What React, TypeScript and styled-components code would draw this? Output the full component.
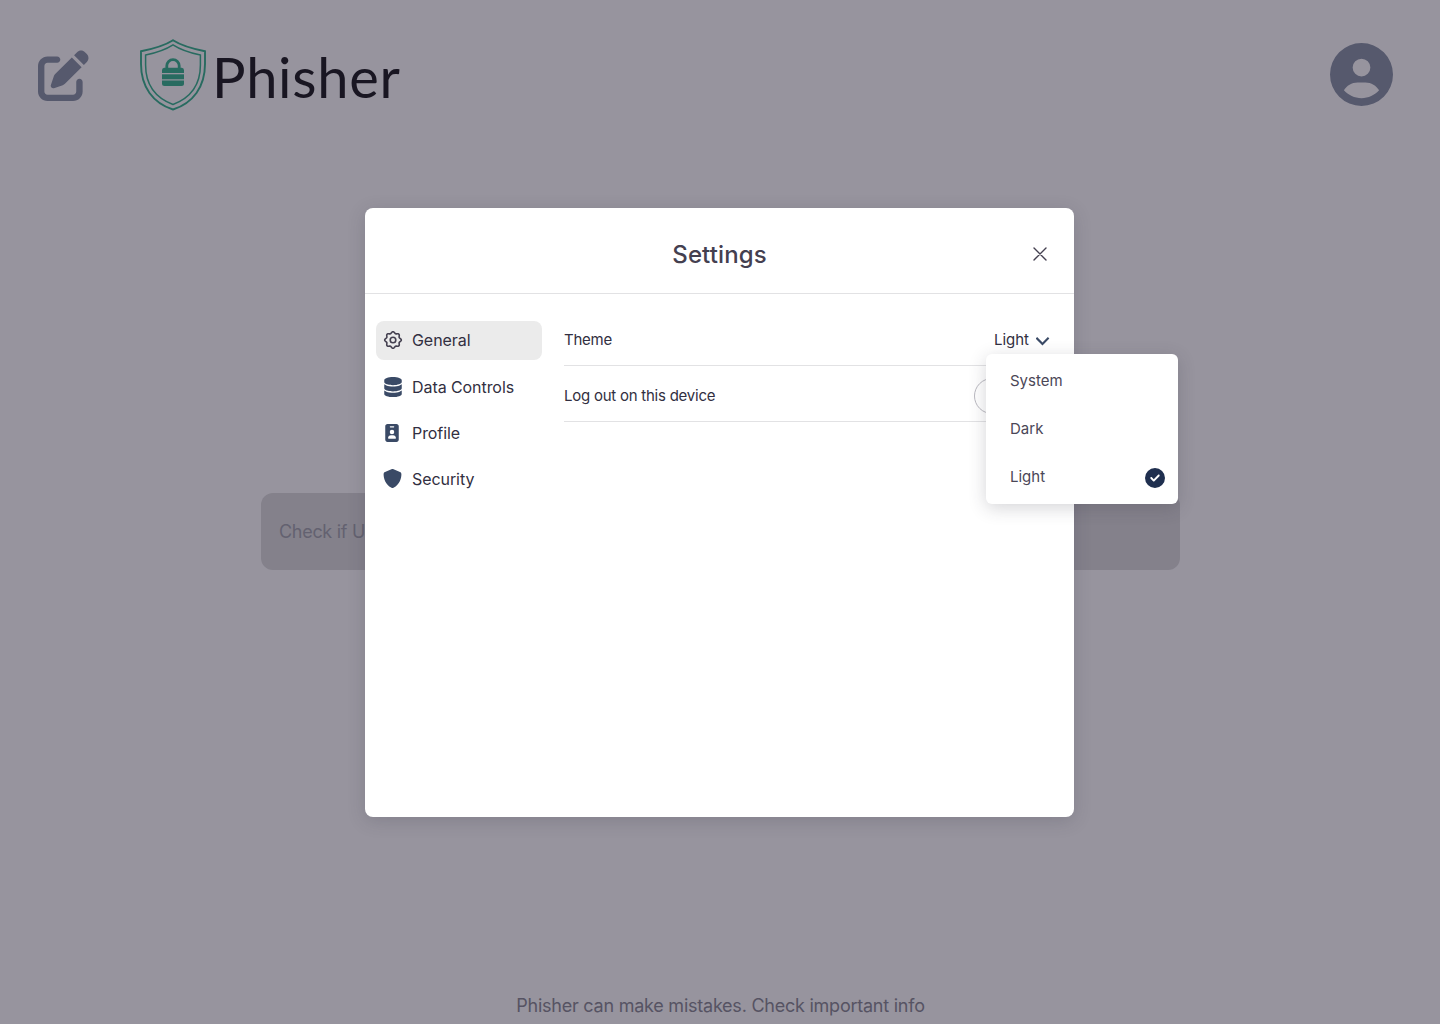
import React from "react";
import styled, { createGlobalStyle } from "styled-components";
import {
  FaPenToSquare,
  FaCircleUser,
  FaDatabase,
  FaIdBadge,
  FaShield,
  FaCircleCheck,
} from "react-icons/fa6";

const GlobalStyle = createGlobalStyle`
  * { box-sizing: border-box; }
  body {
    margin: 0;
    background: #97949e;
    font-family: Inter, "Liberation Sans", sans-serif;
    color: #322f41;
  }
  button {
    font: inherit;
    color: inherit;
    border: 0;
    padding: 0;
    background: none;
    cursor: pointer;
  }
  svg { display: block; flex: none; }
`;

const Page = styled.div`
  position: relative;
  display: flex;
  flex-direction: column;
  width: 1440px;
  height: 1024px;
  overflow: hidden;
`;

const TopBar = styled.header`
  display: flex;
  align-items: flex-start;
  padding: 38px 47px 0 38px;
  height: 150px;
  color: #56596d;
`;

const NewChat = styled.button`
  margin-top: 12px;
  width: 51px;
  height: 51px;
`;

const Brand = styled.div`
  display: flex;
  align-items: flex-start;
  margin-left: 47px;
`;

const BrandName = styled.span`
  margin: 4px 0 0 4px;
  font: 400 56px/70px Lato, sans-serif;
  letter-spacing: 0.7px;
  color: #191622;
`;

const Account = styled.button`
  margin: 5px 0 0 auto;
  width: 63px;
  height: 63px;
`;

const SearchArea = styled.main`
  flex: 1;
  display: flex;
  justify-content: center;
  padding: 343px 0 0 1px;
`;

const SearchBox = styled.div`
  display: flex;
  align-items: center;
  width: 919px;
  height: 77px;
  padding-left: 18px;
  border-radius: 12px;
  background: #84818b;
  color: #636170;
  font-size: 18px;
  letter-spacing: -0.3px;
`;

const Footnote = styled.footer`
  height: 36px;
  padding-left: 1px;
  text-align: center;
  font-size: 18px;
  line-height: 36px;
  letter-spacing: -0.24px;
  color: #565363;
`;

const Overlay = styled.div`
  position: absolute;
  inset: 0;
  padding: 208px 0 0 365px;
`;

const Dialog = styled.section`
  width: 709px;
  height: 609px;
  border-radius: 8px;
  background: #fff;
  box-shadow: 0 4px 18px rgba(47, 43, 61, 0.18);
`;

const DialogHeader = styled.div`
  display: grid;
  grid-template-columns: 1fr auto 1fr;
  align-items: center;
  height: 86px;
  padding: 7px 27px 0;
  border-bottom: 1px solid #e2e2e4;
`;

const Title = styled.h1`
  grid-column: 2;
  margin: 2px 0 0;
  font-size: 24px;
  font-weight: 500;
  line-height: 32px;
  letter-spacing: 0.1px;
  color: #444050;
`;

const Close = styled.button`
  justify-self: end;
`;

const DialogBody = styled.div`
  display: flex;
  gap: 22px;
  padding: 27px 24px 0 11px;
`;

const Nav = styled.nav`
  display: flex;
  flex-direction: column;
  gap: 7px;
  width: 166px;
`;

const NavItem = styled.button<{ $active?: boolean }>`
  display: flex;
  align-items: center;
  gap: 9px;
  height: 39px;
  padding: 0 0 ${(p) => (p.$active ? 1 : 0)}px 7px;
  border-radius: 8px;
  background: ${(p) => (p.$active ? "#ebebeb" : "transparent")};
  font-size: 16px;
  letter-spacing: -0.07px;
`;

const NavIcon = styled.span<{ $dark?: boolean; $narrow?: boolean }>`
  display: flex;
  justify-content: center;
  width: 20px;
  padding-right: ${(p) => (p.$narrow ? 2 : 0)}px;
  color: ${(p) => (p.$dark ? "#3a4a66" : "#444050")};
`;

const Options = styled.div`
  flex: 1;
  margin-top: -11px;
`;

const OptionRow = styled.div`
  position: relative;
  display: flex;
  align-items: center;
  justify-content: space-between;
  height: 56px;
  padding-top: 5px;
  border-bottom: 1px solid #e2e2e4;
  font-size: 15px;
`;

const OptionLabel = styled.span`
  padding-bottom: 2px;
  letter-spacing: -0.24px;
`;

const Select = styled.button`
  display: flex;
  align-items: center;
  gap: 7px;
  padding-bottom: 2px;
  color: #322f41;
  svg { margin-top: 3px; }
`;

const LogOut = styled.button`
  width: 76px;
  height: 36px;
  border: 1px solid #bab9c0;
  border-radius: 18px;
`;

const Menu = styled.div`
  position: absolute;
  z-index: 2;
  top: 44px;
  left: 422px;
  width: 192px;
  height: 150px;
  padding: 2px 13px 4px 24px;
  border-radius: 6px;
  background: #fff;
  box-shadow: 0 4px 18px rgba(47, 43, 61, 0.2);
`;

const MenuItem = styled.div`
  display: flex;
  align-items: center;
  justify-content: space-between;
  height: 48px;
  color: #4b4757;
  svg { margin-top: 3px; color: #1f2f4f; }
`;

const ShieldLogo = () => (
  <svg width="72" height="74" viewBox="0 0 72 74" fill="none">
    <g stroke="#286b60">
      <path
        d="M37 2.2C28 8 16 11 5 13.2V26C5 49 17 65 37 71.5C57 65 69 49 69 26V13.2C58 11 46 8 37 2.2Z"
        strokeWidth="1.9"
      />
      <path
        d="M37 6.8C29 12 19 15 9.6 17V27C9.6 47 20 60 37 66.500C54 60 64.400 47 64.400 27V17C55 15 45 12 37 6.800Z"
        strokeWidth="1.5"
      />
      <path d="M30.8 31v-3.200a6.200 6.200 0 0 1 12.400 0v3.200" strokeWidth="2.800" />
    </g>
    <g fill="#286b60">
      <path d="M28.300 29.700h17.400a2.500 2.500 0 0 1 2.300 2.500v2.900H26v-2.900a2.500 2.500 0 0 1 2.300-2.500Z" />
      <path d="M26 36.300h22v5H26z" />
      <path d="M26 42.500h22v3a2.500 2.500 0 0 1-2.500 2.500H28.500a2.500 2.500 0 0 1-2.500-2.500Z" />
    </g>
  </svg>
);

const gearOutline = Array.from({ length: 96 }, (_, i) => {
  const angle = (i / 96) * Math.PI * 2;
  const radius = 7.5 + 0.8 * Math.cos(8 * angle);
  return `${(10 + radius * Math.sin(angle)).toFixed(2)},${(10 - radius * Math.cos(angle)).toFixed(2)}`;
}).join(" ");

const GearIcon = () => (
  <svg width="20" height="20" viewBox="0 0 20 20" fill="none" stroke="currentColor" strokeWidth="1.6">
    <polygon points={gearOutline} strokeLinejoin="round" />
    <circle cx="10" cy="10" r="2.8" />
  </svg>
);

const CloseIcon = () => (
  <svg width="14" height="14" viewBox="0 0 14 14" stroke="#444050" strokeWidth="1.4" strokeLinecap="round">
    <path d="M1 1l12 12M13 1L1 13" />
  </svg>
);

const Chevron = () => (
  <svg width="14" height="10" viewBox="0 0 14 10" fill="none" stroke="#3a4a66" strokeWidth="2.1">
    <path d="M.4 1.800L6.500 7.900l6.100-6.100" />
  </svg>
);

const sections = [
  { label: "General", icon: <GearIcon />, active: true },
  { label: "Data Controls", icon: <FaDatabase size={20} />, dark: true },
  { label: "Profile", icon: <FaIdBadge size={18} />, dark: true, narrow: true },
  { label: "Security", icon: <FaShield size={19} />, dark: true, narrow: true },
];

const themes = ["System", "Dark", "Light"];
const selected = "Light";

export default function App() {
  return (
    <Page>
      <GlobalStyle />
      <TopBar>
        <NewChat aria-label="New chat"><FaPenToSquare size={51} /></NewChat>
        <Brand>
          <ShieldLogo />
          <BrandName>Phisher</BrandName>
        </Brand>
        <Account aria-label="Account"><FaCircleUser size={63} /></Account>
      </TopBar>
      <SearchArea>
        <SearchBox>Check if U</SearchBox>
      </SearchArea>
      <Footnote>Phisher can make mistakes. Check important info</Footnote>
      <Overlay>
        <Dialog role="dialog">
          <DialogHeader>
            <Title>Settings</Title>
            <Close aria-label="Close"><CloseIcon /></Close>
          </DialogHeader>
          <DialogBody>
            <Nav>
              {sections.map((s) => (
                <NavItem key={s.label} $active={s.active}>
                  <NavIcon $dark={s.dark} $narrow={s.narrow}>{s.icon}</NavIcon>
                  {s.label}
                </NavItem>
              ))}
            </Nav>
            <Options>
              <OptionRow>
                <OptionLabel>Theme</OptionLabel>
                <Select>Light<Chevron /></Select>
                <Menu>
                  {themes.map((t) => (
                    <MenuItem key={t}>
                      {t}
                      {t === selected && <FaCircleCheck size={20} />}
                    </MenuItem>
                  ))}
                </Menu>
              </OptionRow>
              <OptionRow>
                <OptionLabel>Log out on this device</OptionLabel>
                <LogOut aria-label="Log out" />
              </OptionRow>
            </Options>
          </DialogBody>
        </Dialog>
      </Overlay>
    </Page>
  );
}
